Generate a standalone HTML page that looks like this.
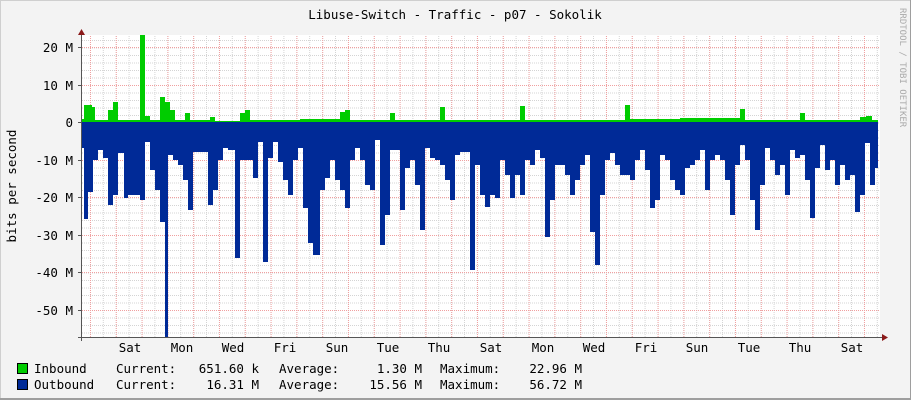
<!DOCTYPE html>
<html><head><meta charset="utf-8"><style>
html,body{margin:0;padding:0;background:#f3f3f3}
svg{display:block}
text{font-family:"DejaVu Sans Mono","Liberation Mono",monospace;font-size:12.5px;fill:#000}
</style></head><body>
<svg width="911" height="400" xmlns="http://www.w3.org/2000/svg">
<defs>
<pattern id="vmin" x="77" y="0" width="12.9" height="400" patternUnits="userSpaceOnUse">
<line x1="0.5" y1="0" x2="0.5" y2="400" stroke="#d4d4d4" stroke-dasharray="1,1"/>
</pattern>
<pattern id="hmin" x="0" y="2.5" width="900" height="7.5" patternUnits="userSpaceOnUse">
<line x1="0" y1="0.5" x2="900" y2="0.5" stroke="#d4d4d4" stroke-dasharray="1,1"/>
</pattern>
<pattern id="vmaj" x="90" y="0" width="25.8" height="400" patternUnits="userSpaceOnUse">
<line x1="0.5" y1="0" x2="0.5" y2="400" stroke="#f0a0a0" stroke-dasharray="1,1"/>
</pattern>
</defs>
<rect x="0" y="0" width="911" height="400" fill="#f3f3f3"/>
<line x1="0" y1="0.5" x2="911" y2="0.5" stroke="#cfcfcf"/>
<line x1="0.5" y1="0" x2="0.5" y2="400" stroke="#cfcfcf"/>
<line x1="910.5" y1="0" x2="910.5" y2="400" stroke="#9e9e9e"/>
<line x1="0" y1="398.5" x2="911" y2="398.5" stroke="#9e9e9e"/>
<line x1="0" y1="399.5" x2="911" y2="399.5" stroke="#9e9e9e"/>
<rect x="82" y="35" width="798" height="302" fill="#fff"/>
<rect x="82" y="35" width="798" height="302" fill="url(#vmin)"/>
<rect x="82" y="35" width="798" height="302" fill="url(#hmin)"/>
<rect x="82" y="35" width="798" height="302" fill="url(#vmaj)"/>
<g stroke="#f0a0a0" stroke-dasharray="1,1">
<line x1="78" y1="47.5" x2="880" y2="47.5"/><line x1="78" y1="85.5" x2="880" y2="85.5"/>
<line x1="78" y1="160.5" x2="880" y2="160.5"/><line x1="78" y1="197.5" x2="880" y2="197.5"/>
<line x1="78" y1="235.5" x2="880" y2="235.5"/><line x1="78" y1="272.5" x2="880" y2="272.5"/>
<line x1="78" y1="310.5" x2="880" y2="310.5"/>
</g>
<path fill="#00cc00" d="M82,122 V119 H84 V105 H92 V107 H95 V120 H108 V110 H113 V102 H118 V120 H140 V35 H145 V116 H150 V120 H160 V97 H165 V102 H170 V110 H175 V120 H185 V113 H190 V120 H210 V117 H215 V121 H240 V113 H245 V110 H250 V120 H300 V119 H340 V112 H345 V110 H350 V120 H390 V113 H395 V120 H440 V107 H445 V120 H520 V106 H525 V120 H625 V105 H630 V119 H680 V118 H740 V109 H745 V120 H800 V113 H805 V120 H860 V117 H866 V116 H872 V120 H878 V122 Z"/>
<path fill="#002a97" d="M82,122 V148 H84 V219 H88 V192 H93 V160 H98 V150 H103 V158 H108 V205 H113 V195 H118 V153 H124 V198 H128 V195 H140 V200 H145 V142 H150 V170 H155 V190 H160 V222 H165 V337 H168 V155 H173 V160 H178 V165 H183 V180 H188 V210 H193 V152 H208 V205 H213 V190 H218 V160 H223 V148 H228 V150 H235 V258 H240 V160 H253 V178 H258 V142 H263 V262 H268 V158 H273 V142 H278 V162 H283 V180 H288 V195 H293 V160 H298 V148 H303 V208 H308 V243 H313 V255 H320 V190 H325 V178 H330 V160 H335 V180 H340 V190 H345 V208 H350 V160 H355 V148 H360 V160 H365 V185 H370 V190 H375 V140 H380 V245 H385 V215 H390 V150 H400 V210 H405 V168 H410 V160 H415 V185 H420 V230 H425 V148 H430 V158 H435 V160 H440 V165 H445 V180 H450 V200 H455 V155 H460 V152 H470 V270 H475 V165 H480 V195 H485 V207 H490 V195 H495 V198 H500 V160 H505 V175 H510 V198 H515 V175 H520 V195 H525 V160 H530 V165 H535 V150 H540 V158 H545 V237 H550 V200 H555 V165 H565 V175 H570 V195 H575 V180 H580 V165 H585 V155 H590 V232 H595 V265 H600 V195 H605 V160 H610 V153 H615 V165 H620 V175 H630 V180 H635 V160 H640 V150 H645 V170 H650 V208 H655 V200 H660 V155 H665 V160 H670 V180 H675 V190 H680 V195 H685 V168 H690 V165 H695 V160 H700 V150 H705 V190 H710 V160 H715 V155 H720 V160 H725 V180 H730 V215 H735 V165 H740 V145 H745 V160 H750 V200 H755 V230 H760 V185 H765 V148 H770 V160 H775 V175 H780 V165 H785 V195 H790 V150 H795 V158 H800 V155 H805 V180 H810 V218 H815 V168 H820 V145 H825 V170 H830 V160 H835 V185 H840 V165 H845 V180 H850 V175 H855 V212 H860 V195 H865 V143 H870 V185 H875 V168 H878 V122 Z"/>
<line x1="81.5" y1="33" x2="81.5" y2="341" stroke="#555"/>
<line x1="78" y1="337.5" x2="884" y2="337.5" stroke="#555"/>
<path d="M78,35 L81.5,29 L85,35 Z" fill="#8b1a1a"/>
<path d="M882,334 L888,337.5 L882,341 Z" fill="#8b1a1a"/>
<g stroke="#555"><line x1="78" y1="47.5" x2="82" y2="47.5"/><line x1="78" y1="85.5" x2="82" y2="85.5"/><line x1="78" y1="122.5" x2="82" y2="122.5"/><line x1="78" y1="160.5" x2="82" y2="160.5"/><line x1="78" y1="197.5" x2="82" y2="197.5"/><line x1="78" y1="235.5" x2="82" y2="235.5"/><line x1="78" y1="272.5" x2="82" y2="272.5"/><line x1="78" y1="310.5" x2="82" y2="310.5"/></g>
<text x="455" y="19" text-anchor="middle">Libuse-Switch - Traffic - p07 - Sokolik</text>
<g text-anchor="end">
<text x="73" y="52">20 M</text><text x="73" y="90">10 M</text><text x="73" y="127">0</text>
<text x="73" y="165">-10 M</text><text x="73" y="202">-20 M</text><text x="73" y="240">-30 M</text>
<text x="73" y="277">-40 M</text><text x="73" y="315">-50 M</text>
</g>
<text transform="translate(16,186) rotate(-90)" text-anchor="middle">bits per second</text>
<text transform="translate(900,8) rotate(90)" style="font-size:9px;fill:#aaa">RRDTOOL / TOBI OETIKER</text>
<g text-anchor="middle">
<text x="130" y="352">Sat</text><text x="182" y="352">Mon</text><text x="233" y="352">Wed</text>
<text x="285" y="352">Fri</text><text x="337" y="352">Sun</text><text x="388" y="352">Tue</text>
<text x="439" y="352">Thu</text><text x="491" y="352">Sat</text><text x="543" y="352">Mon</text>
<text x="594" y="352">Wed</text><text x="646" y="352">Fri</text><text x="697" y="352">Sun</text>
<text x="749" y="352">Tue</text><text x="800" y="352">Thu</text><text x="852" y="352">Sat</text>
</g>
<rect x="17.5" y="363.5" width="10" height="10" fill="#00cc00" stroke="#000"/>
<rect x="17.5" y="379.5" width="10" height="10" fill="#002a97" stroke="#000"/>
<text x="34" y="373">Inbound</text><text x="34" y="389">Outbound</text>
<text x="116" y="373">Current:</text><text x="116" y="389">Current:</text>
<text x="259" y="373" text-anchor="end">651.60 k</text><text x="259" y="389" text-anchor="end">16.31 M</text>
<text x="279" y="373">Average:</text><text x="279" y="389">Average:</text>
<text x="422" y="373" text-anchor="end">1.30 M</text><text x="422" y="389" text-anchor="end">15.56 M</text>
<text x="440" y="373">Maximum:</text><text x="440" y="389">Maximum:</text>
<text x="582" y="373" text-anchor="end">22.96 M</text><text x="582" y="389" text-anchor="end">56.72 M</text>
</svg>
</body></html>
